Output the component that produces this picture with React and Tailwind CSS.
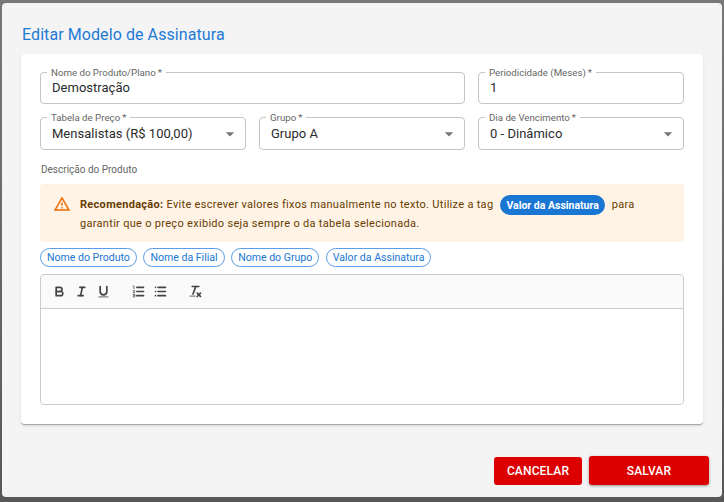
const Field = ({ label, value, select, className }) => {
  return (
    <div className={`relative flex items-center pl-[11px] pr-[5px] border border-[#c4c4c4] rounded-[4px] ${className}`}>
      <span className="absolute left-[6px] top-[-6px] px-[4px] bg-white text-[9.7px] leading-[11px] text-[#666666] whitespace-nowrap">
        {label}{"\u2009"}*
      </span>
      <span className="flex-1 text-[13px] tracking-[0.02px] text-[#2b2b2b] whitespace-nowrap">{value}</span>
      {select && (
        <svg viewBox="0 0 24 24" className="w-[20px] h-[20px] text-[#757575]" fill="currentColor">
          <path d="M7 10l5 5 5-5z" />
        </svg>
      )}
    </div>
  );
};

const Tag = ({ children }) => {
  return (
    <span className="h-[19px] px-[6px] flex items-center rounded-full border border-[#5a9fe6] text-[10.55px] text-[#1976d2] whitespace-nowrap">
      {children}
    </span>
  );
};

const ToolIcon = ({ children, className = "w-[22px]" }) => {
  return (
    <span className={`flex justify-center ${className}`}>
      <svg
        viewBox="0 0 18 18"
        className="w-[15px] h-[15px]"
        fill="none"
        stroke="#444444"
        strokeWidth="2"
        strokeLinecap="round"
        strokeLinejoin="round"
      >
        {children}
      </svg>
    </span>
  );
};

export default function App() {
  return (
    <div className="w-[724px] h-[502px] pt-[3px] pl-[2px] overflow-hidden bg-gradient-to-b from-[#787878] to-[#585858] font-['Roboto',sans-serif]">
      <div className="w-[720px] h-[494px] bg-[#f4f4f4] rounded-[4px] flex flex-col">
        <h2 className="pl-[20px] pt-[21px] h-[50px] shrink-0 text-[16px] leading-[22px] tracking-[0.08px] text-[#1e7ad6]">
          Editar Modelo de Assinatura
        </h2>

        <div className="mx-[19px] mt-[1px] h-[371px] bg-white rounded-[4px] border-b border-[#a8a8a8] shadow-sm px-[19px] pt-[18px] flex flex-col">
          {/* Campos */}
          <div className="flex gap-[13px] h-[32px]">
            <Field label="Nome do Produto/Plano" value="Demostração" className="flex-1" />
            <Field label="Periodicidade (Meses)" value="1" className="w-[206px]" />
          </div>
          <div className="grid grid-cols-3 gap-[13px] h-[33px] mt-[13px]">
            <Field label="Tabela de Preço" value="Mensalistas (R$ 100,00)" select />
            <Field label="Grupo" value="Grupo A" select />
            <Field label="Dia de Vencimento" value="0 - Dinâmico" select />
          </div>

          <p className="mt-[14px] pl-[1px] text-[10px] leading-[12px] text-[#666666]">Descrição do Produto</p>

          {/* Alerta */}
          <div className="mt-[8px] h-[58px] bg-[#fff3e6] rounded-[4px] flex items-start pl-[13px] pt-[10px]">
            <svg viewBox="0 0 24 24" className="w-[18px] h-[18px] mt-[1px] shrink-0" fill="#ed6c02">
              <path d="M12 5.99L19.53 19H4.47L12 5.99M12 2L1 21h22L12 2zm1 14h-2v2h2v-2zm0-6h-2v4h2v-4z" />
            </svg>
            <div className="ml-[9px] text-[11px] leading-[19px] tracking-[0.3px] text-[#663c00]">
              <div className="flex items-center whitespace-nowrap">
                <strong className="font-bold">Recomendação:</strong>
                <span className="ml-[3px]">Evite escrever valores fixos manualmente no texto. Utilize a tag</span>
                <span className="relative top-[1px] mx-[7px] h-[20px] px-[6px] flex items-center rounded-full bg-[#1976d2] text-white text-[10.5px] font-bold tracking-normal">
                  Valor da Assinatura
                </span>
                <span>para</span>
              </div>
              <div className="whitespace-nowrap">garantir que o preço exibido seja sempre o da tabela selecionada.</div>
            </div>
          </div>

          <div className="mt-[6px] flex gap-[6.6px]">
            <Tag>Nome do Produto</Tag>
            <Tag>Nome da Filial</Tag>
            <Tag>Nome do Grupo</Tag>
            <Tag>Valor da Assinatura</Tag>
          </div>

          {/* Editor */}
          <div className="mt-[7px] h-[131px] border border-[#cccccc] rounded-[4px] flex flex-col">
            <div className="h-[34px] bg-[#fafafa] border-b border-[#cccccc] rounded-t-[4px] flex items-center pl-[7px]">
              <ToolIcon>
                <path d="M5,4H9.5A2.5,2.5,0,0,1,12,6.5v0A2.5,2.5,0,0,1,9.5,9H5V4Z" />
                <path d="M5,9h5.5A2.5,2.5,0,0,1,13,11.5v0A2.5,2.5,0,0,1,10.5,14H5V9Z" />
              </ToolIcon>
              <ToolIcon>
                <line x1="7" x2="13" y1="4" y2="4" />
                <line x1="5" x2="11" y1="14" y2="14" />
                <line x1="8" x2="10" y1="14" y2="4" />
              </ToolIcon>
              <ToolIcon>
                <path d="M5,3V9a4.012,4.012,0,0,0,4,4H9a4.012,4.012,0,0,0,4-4V3" />
                <line x1="3.5" x2="14.5" y1="15.5" y2="15.5" strokeWidth="1" />
              </ToolIcon>
              <span className="w-[13px]" />
              <ToolIcon>
                <line x1="7" x2="15" y1="4" y2="4" />
                <line x1="7" x2="15" y1="9" y2="9" />
                <line x1="7" x2="15" y1="14" y2="14" />
                <path d="M2.5 2.5h1v3M2.5 8h2l-2 2.5h2M2.5 12.5h2v3h-2M3 14h1.5" strokeWidth="0.9" />
              </ToolIcon>
              <ToolIcon>
                <line x1="6" x2="15" y1="4" y2="4" />
                <line x1="6" x2="15" y1="9" y2="9" />
                <line x1="6" x2="15" y1="14" y2="14" />
                <line x1="3" x2="3" y1="4" y2="4" />
                <line x1="3" x2="3" y1="9" y2="9" />
                <line x1="3" x2="3" y1="14" y2="14" />
              </ToolIcon>
              <span className="w-[13px]" />
              <ToolIcon>
                <line x1="5" x2="13" y1="3" y2="3" />
                <line x1="6" x2="9.35" y1="12" y2="3" />
                <line x1="11" x2="15" y1="11" y2="15" />
                <line x1="15" x2="11" y1="11" y2="15" />
                <line x1="2.5" x2="8.5" y1="14.5" y2="14.5" strokeWidth="1" />
              </ToolIcon>
            </div>
            <div className="flex-1 bg-white rounded-b-[4px]" />
          </div>
        </div>

        {/* Rodapé */}
        <div className="mt-[31px] pr-[13px] flex justify-end items-start gap-[7px]">
          <button className="mt-[1px] w-[88px] h-[28px] bg-[#dd0000] rounded-[3px] text-white text-[12px] tracking-[0.15px] font-medium">
            CANCELAR
          </button>
          <button className="w-[120px] h-[29px] bg-[#dd0000] rounded-[3px] shadow-[0_1px_3px_rgba(0,0,0,0.4)] text-white text-[12px] tracking-[0.15px] font-medium">
            SALVAR
          </button>
        </div>
      </div>
    </div>
  );
}
